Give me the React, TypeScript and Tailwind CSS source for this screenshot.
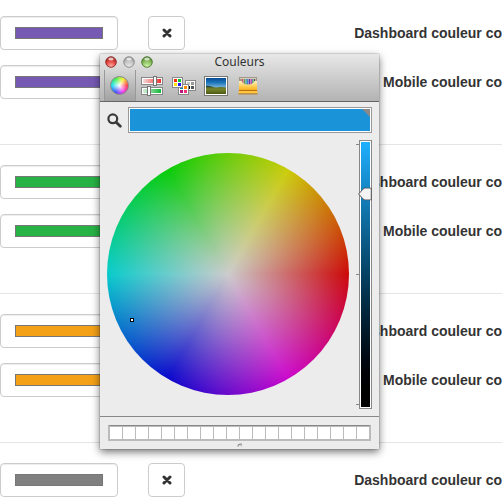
import React, { useState } from "react";

type Row = { id: string; label: string; color: string };

const groups: Row[][] = [
  [
    { id: "d1", label: "Dashboard couleur co", color: "#7559b3" },
    { id: "m1", label: "Mobile couleur co", color: "#7559b3" },
  ],
  [
    { id: "d2", label: "Dashboard couleur co", color: "#27b245" },
    { id: "m2", label: "Mobile couleur co", color: "#27b245" },
  ],
  [
    { id: "d3", label: "Dashboard couleur co", color: "#f4a118" },
    { id: "m3", label: "Mobile couleur co", color: "#f4a118" },
  ],
  [{ id: "d4", label: "Dashboard couleur co", color: "#808080" }],
];

function ColorRow({ id, label, color }: Row) {
  const [value, setValue] = useState(color);
  return (
    <div className="flex h-[34px] items-center">
      <input
        id={id}
        type="color"
        value={value}
        onChange={(e) => setValue(e.target.value)}
        className="block h-[34px] w-[118px] shrink-0 appearance-none rounded border border-[#ccc] bg-white px-[14px] py-[10px] shadow-[inset_0_1px_1px_rgba(0,0,0,0.075)] [&::-webkit-color-swatch]:rounded-none [&::-webkit-color-swatch]:border [&::-webkit-color-swatch]:border-[#777] [&::-webkit-color-swatch-wrapper]:p-0"
      />
      <button
        type="button"
        aria-label="Supprimer"
        className="ml-[30px] flex h-[34px] w-[37px] shrink-0 items-center justify-center rounded border border-[#ccc] bg-white"
      >
        <svg width="10" height="10" viewBox="0 0 10 10" stroke="#333" strokeWidth="3" strokeLinecap="round">
          <path d="M2 2 8 8M8 2 2 8" />
        </svg>
      </button>
      <label htmlFor={id} className="ml-auto text-[14px] leading-5 font-bold whitespace-nowrap text-[#333]">
        {label}
      </label>
    </div>
  );
}

function Light({ kind }: { kind: "red" | "gray" | "green" }) {
  const c = {
    red: ["#ffb0a6", "#e2403c", "#8c2a28"],
    gray: ["#e8e8e8", "#c2c2c2", "#8b8b8b"],
    green: ["#d2f4aa", "#86bc5c", "#4c7a31"],
  }[kind];
  return (
    <button type="button" aria-label={kind} className="block size-3">
      <svg width="12" height="12" viewBox="0 0 12 12">
        <defs>
          <radialGradient id={`light-${kind}`} cx="0.5" cy="0.9" r="0.85">
            <stop offset="0" stopColor={c[0]} />
            <stop offset="0.6" stopColor={c[1]} />
            <stop offset="1" stopColor={c[2]} />
          </radialGradient>
        </defs>
        <circle cx="6" cy="6" r="5.3" fill={`url(#light-${kind})`} stroke={c[2]} strokeWidth="0.9" />
        <ellipse cx="6" cy="3.1" rx="2.7" ry="1.5" fill="#fff" opacity="0.7" />
      </svg>
    </button>
  );
}

function SlidersIcon() {
  return (
    <svg width="22" height="20" viewBox="0 0 22 20" shapeRendering="crispEdges">
      <defs>
        <linearGradient id="sl-red">
          <stop offset="0" stopColor="#f6dcda" />
          <stop offset="1" stopColor="#f0302c" />
        </linearGradient>
        <linearGradient id="sl-green">
          <stop offset="0" stopColor="#d6efd9" />
          <stop offset="1" stopColor="#12b838" />
        </linearGradient>
      </defs>
      <rect x="0.5" y="1.5" width="21" height="7" fill="#fff" stroke="#888" />
      <rect x="2" y="3" width="18" height="4" fill="url(#sl-red)" />
      <rect x="0.5" y="11.5" width="21" height="7" fill="#fff" stroke="#888" />
      <rect x="2" y="13" width="18" height="4" fill="url(#sl-green)" />
      <rect x="12.5" y="0.5" width="3" height="9" fill="#fff" stroke="#777" />
      <rect x="6.5" y="10.5" width="3" height="9" fill="#fff" stroke="#777" />
    </svg>
  );
}

function PaletteTile({ x, y, colors }: { x: number; y: number; colors: string[] }) {
  return (
    <g>
      <rect x={x + 0.5} y={y + 0.5} width="10" height="10" fill="#fff" stroke="#888" />
      {colors.map((c, i) => (
        <rect key={i} x={x + 2 + (i % 2) * 4} y={y + 2 + Math.floor(i / 2) * 4} width="3" height="3" fill={c} />
      ))}
    </g>
  );
}

function PalettesIcon() {
  return (
    <svg width="24" height="18" viewBox="0 0 24 18" shapeRendering="crispEdges">
      <PaletteTile x={13} y={3} colors={["#c8c8c8", "#999", "#000", "#555"]} />
      <PaletteTile x={6} y={7} colors={["#0089a8", "#ff8a00", "#b4197c", "#f0327c"]} />
      <PaletteTile x={0} y={0} colors={["#ff2a00", "#00c82c", "#ffe100", "#2418f0"]} />
    </svg>
  );
}

function PictureIcon() {
  return (
    <svg width="24" height="20" viewBox="0 0 24 20">
      <defs>
        <linearGradient id="sky" x2="0" y2="1">
          <stop offset="0" stopColor="#064a92" />
          <stop offset="0.3" stopColor="#1f78bc" />
          <stop offset="0.6" stopColor="#7db6dc" />
        </linearGradient>
        <linearGradient id="field" x2="0" y2="1">
          <stop offset="0" stopColor="#4c6327" />
          <stop offset="0.4" stopColor="#76822b" />
          <stop offset="1" stopColor="#4a5a14" />
        </linearGradient>
      </defs>
      <rect x="0.5" y="0.5" width="23" height="19" fill="#fff" stroke="#777" />
      <rect x="2" y="2" width="20" height="16" fill="url(#sky)" />
      <path d="M2 10 7 10.5l5 1 5-.5 5 .5V18H2z" fill="url(#field)" />
      <path d="M2 9.6 6 10 9 11.3H2z" fill="#2c4c48" />
    </svg>
  );
}

function CrayonsIcon() {
  const pencils = ["#8b6c58", "#d34f72", "#6c9b51", "#22a1a0", "#236dd0", "#6c33ba", "#ad39ae", "#2e9b72", "#515151"];
  return (
    <svg width="20" height="18" viewBox="0 0 20 18">
      <defs>
        <linearGradient id="box" x2="0" y2="1">
          <stop offset="0" stopColor="#fff0c4" />
          <stop offset="0.6" stopColor="#ffcb4a" />
          <stop offset="1" stopColor="#f5a81c" />
        </linearGradient>
      </defs>
      <rect x="1.5" y="0.5" width="17" height="13" fill="#d9cdbb" stroke="#a0968a" />
      {pencils.map((c, i) => (
        <rect key={c} x={2.4 + i * 1.7} y="2" width="1.2" height="6" fill={c} />
      ))}
      <path d="M1 4h2.5Q5 7.6 10 7.6T16.5 4H19v9.5H1z" fill="url(#box)" />
      <path d="M1 13h18v1H1z" fill="#b8700c" />
      <path d="M1 14h18l.6 2.5H.4z" fill="#ffc640" />
      <path d="M.4 16.4h19.2v1H.4z" fill="#b0702a" />
    </svg>
  );
}

function ColorWindow() {
  const [level, setLevel] = useState(80);
  return (
    <section
      aria-label="Couleurs"
      className="absolute top-[54px] left-[100px] w-[279px] bg-[#ececec] font-['Noto_Sans',sans-serif] shadow-[0_0_1px_rgba(0,0,0,0.6),0_3px_8px_rgba(0,0,0,0.55)]"
    >
      <header className="flex h-12 flex-col border-b border-[#666] bg-linear-to-b from-[#e8e8e8] to-[#b3b3b3]">
        <div className="grid h-4 grid-cols-3 items-center">
          <div className="flex gap-[6px] pl-[5px]">
            <Light kind="red" />
            <Light kind="gray" />
            <Light kind="green" />
          </div>
          <h2 className="text-center text-[12px] leading-4 text-[#333]">Couleurs</h2>
        </div>
        <div className="flex flex-1 items-center pl-1">
          <button
            type="button"
            aria-label="Roue chromatique"
            className="flex h-full w-8 items-center justify-center border-x border-[#999] bg-linear-to-b from-transparent to-black/10 pr-px"
          >
            <span className="size-[19px] rounded-full border border-[#888] bg-[radial-gradient(circle_closest-side,#fff,#fff0_90%),conic-gradient(from_90deg,#ff3c50,#f03cf0,#4450ff,#20dcf0,#3cf050,#f5f030,#ff3c50)]" />
          </button>
          <button type="button" aria-label="Curseurs" className="flex w-8 justify-center">
            <SlidersIcon />
          </button>
          <button type="button" aria-label="Palettes" className="flex w-8 justify-center">
            <PalettesIcon />
          </button>
          <button type="button" aria-label="Images" className="flex w-8 justify-center">
            <PictureIcon />
          </button>
          <button type="button" aria-label="Crayons" className="flex w-8 justify-center">
            <CrayonsIcon />
          </button>
        </div>
      </header>

      <div className="flex items-center px-[7px] pt-[5px]">
        <button type="button" aria-label="Loupe" className="flex w-[21px] shrink-0">
          <svg width="15" height="15" viewBox="0 0 15 15" fill="none" stroke="#3a3a3a">
            <circle cx="5.8" cy="5.8" r="4.4" strokeWidth="2.2" />
            <path d="m9.2 9.2 4.1 4.1" strokeWidth="2.8" strokeLinecap="round" />
          </svg>
        </button>
        <button type="button" aria-label="Couleur choisie" className="h-[26px] flex-1 border border-[#999] bg-white p-px">
          <span className="flex h-full justify-end bg-[#1b93d9]">
            <svg width="8" height="8" viewBox="0 0 8 8">
              <path d="M0 0h8v8z" fill="#888" />
            </svg>
          </span>
        </button>
      </div>

      <div className="flex px-[7px] py-[7px]">
        <div className="mt-[13px] size-[242px] shrink-0 rounded-full bg-[radial-gradient(circle_closest-side,#ccc,#cccccc00),conic-gradient(from_90deg,#cc0808,#cc08cc,#0808cc,#08cccc,#08cc08,#cccc08,#cc0808)]">
          <div className="relative top-[165px] left-[23px] size-1 border border-black bg-white" />
        </div>
        <div className="mt-1 mb-1 ml-[7px] flex w-[3px] flex-col justify-between">
          <i className="h-px bg-[#888]" />
          <i className="h-px bg-[#888]" />
          <i className="h-px bg-[#888]" />
        </div>
        <div className="relative h-[269px] w-[13px] border border-[#888] bg-white p-px">
          <div className="h-full bg-linear-to-b from-[#1fb0ff] to-black" />
          <svg
            className="absolute -left-[2px] w-[14px] -translate-y-1/2"
            style={{ top: `${100 - level}%` }}
            height="13"
            viewBox="0 0 14 13"
          >
            <path d="M.6 6.5 5 1.6Q6 .5 7.5.5h5.8v12H7.5Q6 12.5 5 11.4z" fill="#f4f4f4" stroke="#555" />
          </svg>
          <input
            type="range"
            aria-label="Luminosité"
            value={level}
            onChange={(e) => setLevel(Number(e.target.value))}
            className="absolute inset-0 h-full w-full opacity-0 [direction:rtl] [writing-mode:vertical-lr]"
          />
        </div>
      </div>

      <footer className="flex flex-col items-center border-t border-[#888] px-2 pt-2">
        <div className="flex h-4 w-full border-2 border-t border-[#bbb] border-t-[#888] bg-[#bbb] pt-px">
          {Array.from({ length: 20 }, (_, i) => (
            <button
              key={i}
              type="button"
              aria-label={`Case ${i + 1}`}
              className="flex-1 border-r border-[#bbb] bg-white last:border-r-0"
            />
          ))}
        </div>
        <svg width="6" height="8" viewBox="0 0 6 8">
          <path d="M1 5.5Q1.2 2.6 4.8 3.2" fill="none" stroke="#888" strokeWidth="1.3" />
          <circle cx="4.3" cy="4.8" r="0.8" fill="#aaa" />
        </svg>
      </footer>
    </section>
  );
}

export default function App() {
  return (
    <main className="relative min-h-screen overflow-hidden bg-white font-['Liberation_Sans',Arial,sans-serif]">
      <form className="-mt-1">
        {groups.map((rows, i) => (
          <fieldset
            key={i}
            className="flex flex-col gap-[15px] border-b border-[#e5e5e5] pt-5 pb-[45px] last:border-b-0 last:pb-0"
          >
            {rows.map((row) => (
              <ColorRow key={row.id} {...row} />
            ))}
          </fieldset>
        ))}
      </form>
      <ColorWindow />
    </main>
  );
}
